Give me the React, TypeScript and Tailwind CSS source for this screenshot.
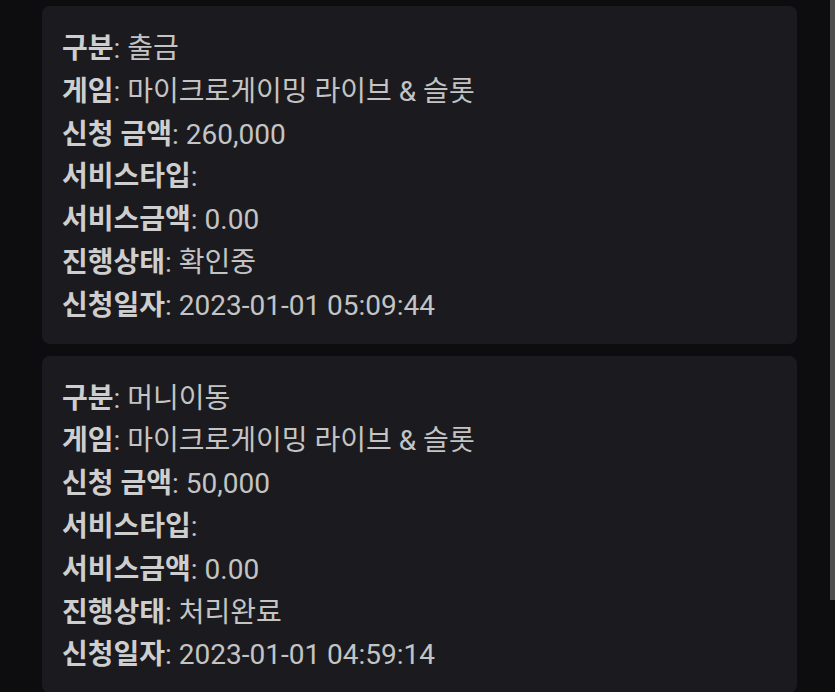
import React from 'react';

interface Row {
  label: string;
  value: string;
}

const records: Row[][] = [
  [
    { label: '구분', value: '출금' },
    { label: '게임', value: '마이크로게이밍 라이브 & 슬롯' },
    { label: '신청 금액', value: '260,000' },
    { label: '서비스타입', value: '' },
    { label: '서비스금액', value: '0.00' },
    { label: '진행상태', value: '확인중' },
    { label: '신청일자', value: '2023-01-01 05:09:44' },
  ],
  [
    { label: '구분', value: '머니이동' },
    { label: '게임', value: '마이크로게이밍 라이브 & 슬롯' },
    { label: '신청 금액', value: '50,000' },
    { label: '서비스타입', value: '' },
    { label: '서비스금액', value: '0.00' },
    { label: '진행상태', value: '처리완료' },
    { label: '신청일자', value: '2023-01-01 04:59:14' },
  ],
];

const RecordCard: React.FC<{ rows: Row[] }> = ({ rows }) => (
  <div className="w-[755px] rounded-lg bg-[#1b1b1f] pl-5 pt-[22px] pb-4">
    {rows.map((r) => (
      <div key={r.label} className="h-[42.8px] leading-[42.8px] whitespace-nowrap text-[28px] text-[#c4c4c4]">
        <span className="font-bold text-[#cecece]">{r.label}</span>
        <span>: {r.value}</span>
      </div>
    ))}
  </div>
);

export default function App() {
  return (
    <div
      className="relative h-[692px] overflow-hidden bg-[#0d0d0f] pl-[42px] pt-[6px]"
      style={{ fontFamily: 'Roboto, "Noto Sans CJK KR", sans-serif' }}
    >
      <div className="flex flex-col gap-3">
        {records.map((rows, i) => (
          <RecordCard key={i} rows={rows} />
        ))}
      </div>
      {/* scrollbar thumb */}
      <div className="absolute right-0 top-0 h-[600px] w-[5px] bg-[#4d4d4f]" />
    </div>
  );
}
